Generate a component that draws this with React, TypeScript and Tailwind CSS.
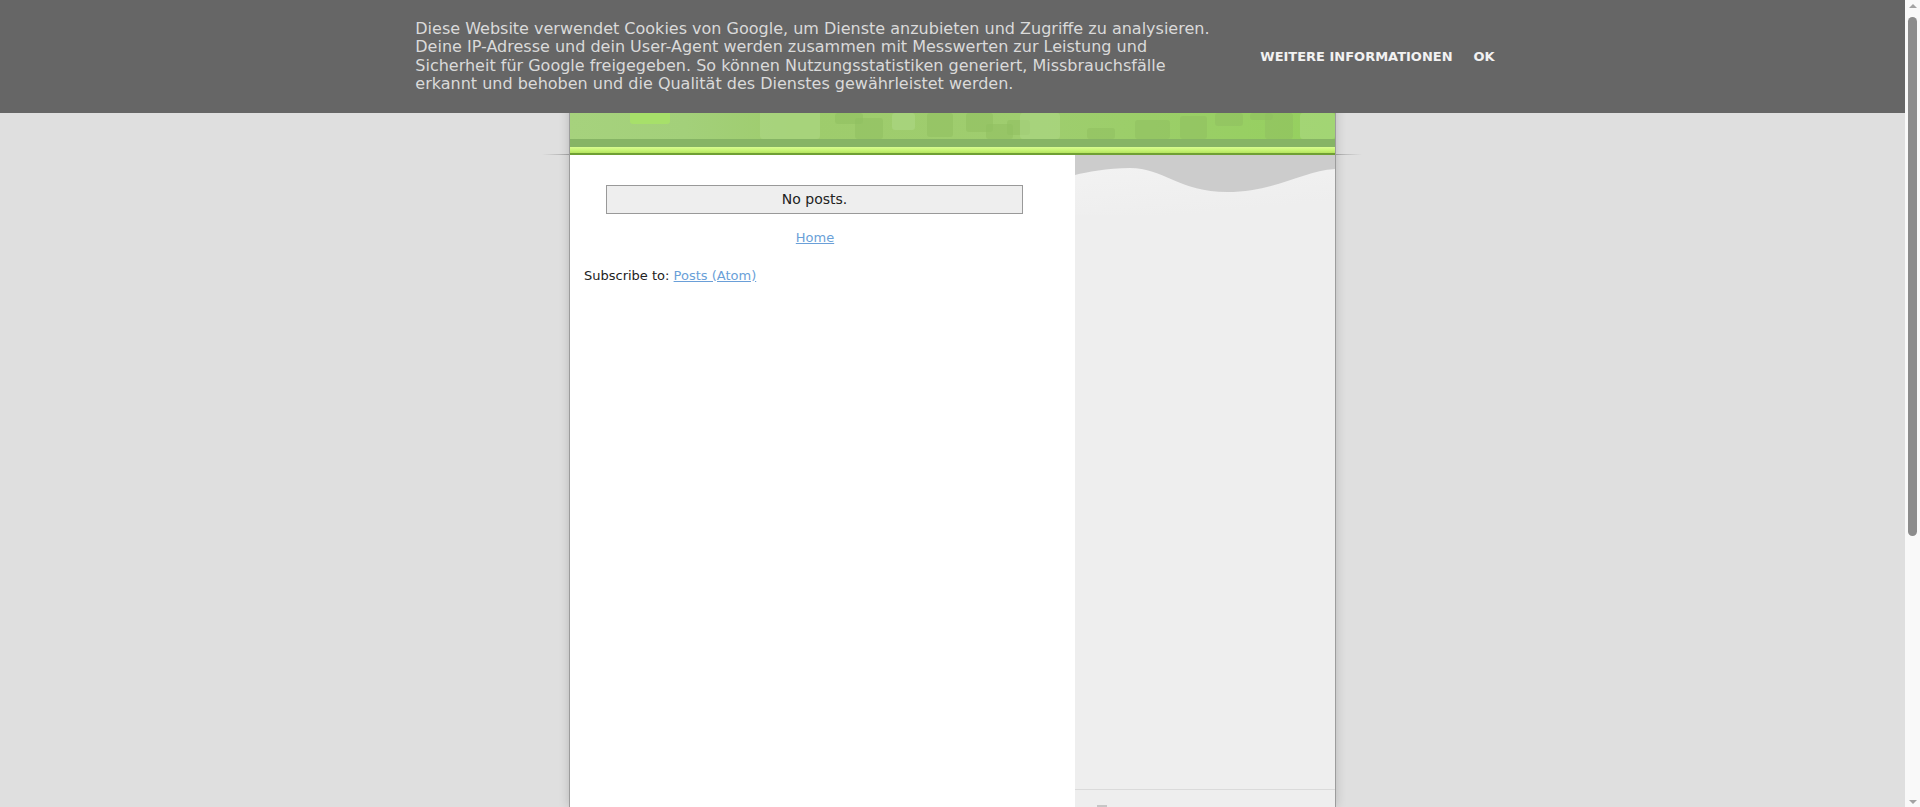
import React from "react";

const font = { fontFamily: '"DejaVu Sans", Verdana, sans-serif' };

function HeaderPattern() {
  const dark = [
    [265, 113, 28, 11],
    [285, 118, 28, 21],
    [357, 113, 26, 24],
    [396, 113, 27, 19],
    [416, 124, 27, 15],
    [437, 120, 23, 15],
    [517, 128, 28, 11],
    [565, 120, 35, 19],
    [610, 116, 27, 23],
    [645, 113, 28, 13],
    [680, 113, 23, 7],
    [695, 113, 28, 26],
  ];
  const light = [
    [322, 113, 23, 17],
    [450, 113, 40, 26],
    [730, 113, 35, 26],
    [190, 105, 60, 34],
  ];
  return (
    <svg width="765" height="139" viewBox="0 0 765 139" className="block">
      <defs>
        <linearGradient id="hg" x1="0" y1="0" x2="1" y2="0">
          <stop offset="0" stopColor="#a6d27d" />
          <stop offset="0.15" stopColor="#a3d07a" />
          <stop offset="0.3" stopColor="#9ecc6c" />
          <stop offset="0.6" stopColor="#9fcd6f" />
          <stop offset="1" stopColor="#95d05e" />
        </linearGradient>
      </defs>
      <rect x="0" y="0" width="765" height="139" fill="url(#hg)" />
      <rect x="60" y="100" width="40" height="24" rx="3" fill="#a7e06a" />
      {dark.map(([x, y, w, h], i) => (
        <rect key={"d" + i} x={x} y={y} width={w} height={h} rx="3" fill="#8fbf60" opacity="0.55" />
      ))}
      {light.map(([x, y, w, h], i) => (
        <rect key={"l" + i} x={x} y={y} width={w} height={h} rx="3" fill="#b0d98a" opacity="0.5" />
      ))}
    </svg>
  );
}

function Wave() {
  return (
    <svg width="260" height="60" viewBox="0 0 260 60" className="block">
      <defs>
        <linearGradient id="wg" x1="0" y1="0" x2="0.4" y2="1">
          <stop offset="0" stopColor="#f3f3f3" />
          <stop offset="1" stopColor="#eeeeee" />
        </linearGradient>
      </defs>
      <rect x="0" y="0" width="260" height="60" fill="url(#wg)" />
      <path
        d="M0,0 H260 V14 C228,16 200,37 152,37 C105,37 88,13 55,13 C32,13 12,17 0,20 Z"
        fill="#cccccc"
      />
    </svg>
  );
}

export default function App() {
  return (
    <div className="flex h-[807px] w-full overflow-hidden bg-[#dfdfdf]" style={font}>
      <div className="relative flex-1 overflow-hidden">
        <div className="absolute left-[542px] top-[154px] h-px w-[820px] bg-[linear-gradient(to_right,rgba(150,150,150,0),#9a9a9a_4%,#9a9a9a_96%,rgba(150,150,150,0))]" />

        <div className="relative mx-auto flex h-[807px] w-[767px] flex-col border-x border-[#9c9c9c] shadow-[0_0_10px_rgba(0,0,0,0.18)]">
          <div className="flex h-[155px] flex-col">
            <HeaderPattern />
            <div className="h-[8px] bg-[#86b465]" />
            <div className="h-[6px] bg-[linear-gradient(to_bottom,#d9fb90,#c4f272_60%,#b5e35e)]" />
            <div className="h-[2px] bg-[#6f9f34]" />
          </div>
          <div className="flex flex-1">
            <div className="w-[505px] bg-white text-[13px] text-[#333]">
              <div className="ml-[14px] flex w-[462px] flex-col">
                <div className="ml-[22px] mt-[30px] flex h-[29px] w-[417px] items-center justify-center border border-[#999] bg-[#eeeeee] text-[14px] text-[#222]">
                  No posts.
                </div>
                <div className="mt-[16px] text-center leading-[15px]">
                  <a href="#" className="text-[#6a9fd8] underline">Home</a>
                </div>
                <div className="mt-[23px] leading-[15px] text-[#222]">
                  Subscribe to: <a href="#" className="text-[#6a9fd8] underline">Posts (Atom)</a>
                </div>
              </div>
            </div>
            <div className="flex w-[260px] flex-col bg-[#eeeeee]">
              <Wave />
              <div className="flex-1" />
              <div className="h-px bg-[#dadada]" />
              <div className="h-[17px] pl-[22px] pt-[15px]">
                <div className="h-[3px] w-[10px] bg-[#c6c6c6]" />
              </div>
            </div>
          </div>
        </div>

        <div className="absolute left-0 right-0 top-0 z-10 flex h-[113px] items-center justify-center bg-[#666666] pl-[5px]">
          <div className="w-[800px] whitespace-nowrap text-[16px] leading-[18.5px] text-[#dadada]">
            Diese Website verwendet Cookies von Google, um Dienste anzubieten und Zugriffe zu analysieren.
            <br />
            Deine IP-Adresse und dein User-Agent werden zusammen mit Messwerten zur Leistung und
            <br />
            Sicherheit für Google freigegeben. So können Nutzungsstatistiken generiert, Missbrauchsfälle
            <br />
            erkannt und behoben und die Qualität des Dienstes gewährleistet werden.
          </div>
          <div className="ml-[45px] flex gap-[21px] text-[13px] font-bold text-[#f2f2f2]">
            <span>WEITERE INFORMATIONEN</span>
            <span>OK</span>
          </div>
        </div>
      </div>

      <div className="flex w-[15px] flex-col items-center bg-[#f9f9f9]">
        <div className="mt-[4px] h-0 w-0 border-x-[4px] border-b-[4px] border-x-transparent border-b-[#a3a3a3]" />
        <div className="mt-[9px] h-[519px] w-[9px] rounded-full bg-[#8c8c8c]" />
        <div className="flex-1" />
        <div className="mb-[3px] h-0 w-0 border-x-[4px] border-t-[4px] border-x-transparent border-t-[#a3a3a3]" />
      </div>
    </div>
  );
}
